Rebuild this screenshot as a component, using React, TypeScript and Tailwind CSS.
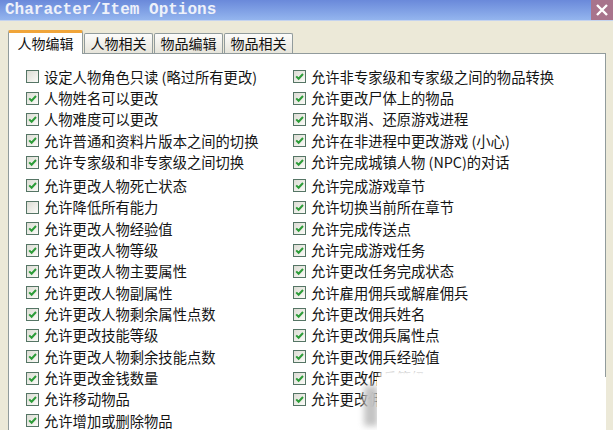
import React from "react";

type Opt = { label: string; checked: boolean };

const groupA: [Opt, Opt | null][] = [
  [{ label: "设定人物角色只读 (略过所有更改)", checked: false }, { label: "允许非专家级和专家级之间的物品转换", checked: true }],
  [{ label: "人物姓名可以更改", checked: true }, { label: "允许更改尸体上的物品", checked: true }],
  [{ label: "人物难度可以更改", checked: true }, { label: "允许取消、还原游戏进程", checked: true }],
  [{ label: "允许普通和资料片版本之间的切换", checked: true }, { label: "允许在非进程中更改游戏 (小心)", checked: true }],
  [{ label: "允许专家级和非专家级之间切换", checked: true }, { label: "允许完成城镇人物 (NPC)的对话", checked: true }],
];

const groupB: [Opt, Opt | null][] = [
  [{ label: "允许更改人物死亡状态", checked: true }, { label: "允许完成游戏章节", checked: true }],
  [{ label: "允许降低所有能力", checked: false }, { label: "允许切换当前所在章节", checked: true }],
  [{ label: "允许更改人物经验值", checked: true }, { label: "允许完成传送点", checked: true }],
  [{ label: "允许更改人物等级", checked: true }, { label: "允许完成游戏任务", checked: true }],
  [{ label: "允许更改人物主要属性", checked: true }, { label: "允许更改任务完成状态", checked: true }],
  [{ label: "允许更改人物副属性", checked: true }, { label: "允许雇用佣兵或解雇佣兵", checked: true }],
  [{ label: "允许更改人物剩余属性点数", checked: true }, { label: "允许更改佣兵姓名", checked: true }],
  [{ label: "允许更改技能等级", checked: true }, { label: "允许更改佣兵属性点", checked: true }],
  [{ label: "允许更改人物剩余技能点数", checked: true }, { label: "允许更改佣兵经验值", checked: true }],
  [{ label: "允许更改金钱数量", checked: true }, { label: "允许更改佣兵等级", checked: true }],
  [{ label: "允许移动物品", checked: true }, { label: "允许更改佣兵技能", checked: true }],
  [{ label: "允许增加或删除物品", checked: true }, null],
];

function CheckBox({ checked }: { checked: boolean }) {
  return (
    <span className="w-[13px] h-[13px] shrink-0 border border-[#557565] bg-gradient-to-br from-[#dcdcd4] to-[#fbfbf8] flex items-center justify-center">
      {checked && (
        <svg width="11" height="11" viewBox="0 0 11 11">
          <polyline points="2.2,5.4 4.6,7.8 9,3" fill="none" stroke="#2c9c38" strokeWidth="2" />
        </svg>
      )}
    </span>
  );
}

function Item({ opt }: { opt: Opt }) {
  return (
    <div className="flex items-center gap-[5px] whitespace-nowrap">
      <CheckBox checked={opt.checked} />
      <span className="text-[14.3px] leading-none text-[#141414]">{opt.label}</span>
    </div>
  );
}

function Rows({ rows }: { rows: [Opt, Opt | null][] }) {
  return (
    <div className="flex flex-col">
      {rows.map(([l, r], i) => (
        <div key={i} className="flex items-center h-[21.35px]">
          <div className="w-[267px]">
            <Item opt={l} />
          </div>
          {r && <Item opt={r} />}
        </div>
      ))}
    </div>
  );
}

export default function App() {
  return (
    <div
      className="relative w-[613px] h-[430px] overflow-hidden bg-[#ece9d8] flex flex-col"
      style={{ fontFamily: '"Noto Sans CJK SC", "Noto Sans", sans-serif' }}
    >
      {/* title bar */}
      <div className="h-[21px] shrink-0 flex justify-between bg-gradient-to-b from-[#6a89da] to-[#94b5ee] border-b border-[#c4d3ef]">
        <span
          className="pl-[5px] pt-[1px] text-[16px] leading-[18px] font-bold text-[#eef1fa]"
          style={{ fontFamily: '"Liberation Mono", monospace' }}
        >
          Character/Item Options
        </span>
        <span className="w-[22px] h-[20px] bg-[#a8748c] flex items-center justify-center">
          <svg width="14" height="14" viewBox="0 0 14 14">
            <path d="M2 2 L12 12 M12 2 L2 12" stroke="#fff" strokeWidth="2.4" />
          </svg>
        </span>
      </div>

      {/* tabs + page */}
      <div className="flex-1 flex flex-col pt-[9px] pl-[8px] pr-[7px]">
        <div className="flex items-end h-[24px] relative z-10 -mb-px">
          <div className="w-[75px] h-[24px] bg-white border-x border-[#919b9c] border-t-[3px] border-t-[#f0a53a] rounded-t-[2px] flex items-center justify-center text-[14px] text-[#111]">
            人物编辑
          </div>
          {["人物相关", "物品编辑", "物品相关"].map((t) => (
            <div
              key={t}
              className="ml-[1px] w-[69px] h-[20px] mb-px bg-gradient-to-b from-[#fcfcfb] to-[#e6e4da] border border-b-0 border-[#919b9c] rounded-t-[2px] flex items-center justify-center text-[14px] text-[#111]"
            >
              {t}
            </div>
          ))}
        </div>
        <div className="flex-1 bg-white border border-[#919b9c] pl-[17px] pt-[12px]">
          <Rows rows={groupA} />
          <div className="h-[2.6px]" />
          <Rows rows={groupB} />
        </div>
      </div>

      {/* pasted-over blank area */}
      <div className="absolute left-[364px] top-[386px] w-[14px] h-[40px] bg-[#c4c4c4] blur-[3px]" />
      <div className="absolute left-[380px] top-[370px] w-[62px] h-[12px] bg-white blur-[2px]" />
      <div className="absolute left-[377px] top-[377px] w-[229px] h-[53px] bg-white" />
    </div>
  );
}
